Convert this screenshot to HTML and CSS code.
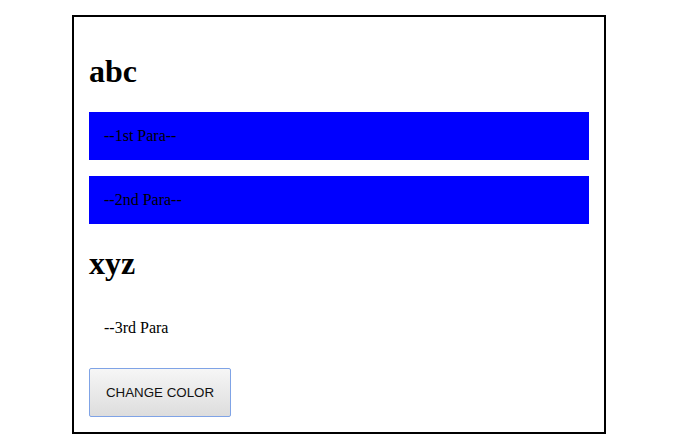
FILE: index.html
```html
<!DOCTYPE html>
<html>
<head>
<meta charset="utf-8">
<link rel="stylesheet" href="styles.css">
</head>
<body>
<div class="box">
  <h1 class="title">abc</h1>
  <p class="para blue">--1st Para--</p>
  <p class="para blue">--2nd Para--</p>
  <h1 class="title">xyz</h1>
  <p class="para">--3rd Para</p>
  <button class="btn">CHANGE COLOR</button>
</div>
</body>
</html>
```
FILE: styles.css
```css
html, body {
  margin: 0;
  background: #fff;
}
body {
  font-family: "Liberation Serif", "Times New Roman", serif;
  font-size: 16px;
  color: #000;
}
.box {
  width: 500px;
  margin: 15px 0 0 72px;
  padding: 15px;
  border: 2px solid #000;
}
.title {
  font-size: 32px;
  font-weight: bold;
  margin: 21.44px 0;
  line-height: normal;
}
.para {
  margin: 16px 0;
  padding: 15px;
}
.blue {
  background: #0000ff;
}
.btn {
  display: block;
  margin: 0;
  width: 142px;
  height: 49px;
  padding: 0;
  font-family: "Liberation Sans", Arial, sans-serif;
  font-size: 13.333px;
  color: #111;
  border: 1px solid #7fa3e6;
  border-radius: 2px;
  background: linear-gradient(to bottom, #f6f6f6, #dddddd);
}
```
